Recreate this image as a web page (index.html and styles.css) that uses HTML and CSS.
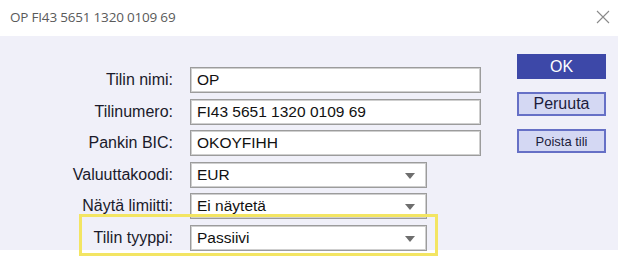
FILE: index.html
```html
<!DOCTYPE html>
<html>
	<head>
		<meta charset="UTF-8" />
		<title>OP FI43 5651 1320 0109 69</title>
		<link rel="stylesheet" href="styles.css">
	</head>
	<body>
		<div class="dialog">
			<header class="titlebar">
				<span class="title">OP FI43 5651 1320 0109 69</span>
				<svg class="close" width="14" height="14" viewBox="0 0 14 14">
					<path d="M1 1 L13 13 M13 1 L1 13" stroke="#8a8a8a" stroke-width="1.1" fill="none" />
				</svg>
			</header>
			<main class="panel">
				<div class="form">
					<label class="label">Tilin nimi:</label>
					<div class="field wide">OP</div>
					<label class="label">Tilinumero:</label>
					<div class="field wide">FI43 5651 1320 0109 69</div>
					<label class="label">Pankin BIC:</label>
					<div class="field wide">OKOYFIHH</div>
					<label class="label">Valuuttakoodi:</label>
					<div class="field select">EUR<span class="arrow"></span></div>
					<label class="label">Näytä limiitti:</label>
					<div class="field select">Ei näytetä<span class="arrow"></span></div>
					<label class="label">Tilin tyyppi:</label>
					<div class="field select">Passiivi<span class="arrow"></span></div>
				</div>
				<div class="buttons">
					<button class="btn primary">OK</button>
					<button class="btn">Peruuta</button>
					<button class="btn small">Poista tili</button>
				</div>
			</main>
			<div class="highlight"></div>
		</div>
	</body>
</html>
```

FILE: styles.css
```css
* {
	margin: 0;
	padding: 0;
	box-sizing: border-box;
}
body {
	background-color: #fff;
	font-family: "Liberation Sans", Arial, sans-serif;
}
.dialog {
	position: relative;
	width: 618px;
	height: 257px;
}
.titlebar {
	height: 36px;
	display: flex;
	align-items: center;
	justify-content: space-between;
	padding-left: 10px;
	padding-right: 8px;
	padding-bottom: 2px;
}
.title {
	font-family: "Open Sans", sans-serif;
	font-size: 13.5px;
	color: #5a5a5a;
	letter-spacing: -0.2px;
}
.panel {
	height: 214px;
	background-color: #f0f0f9;
	display: flex;
	padding-top: 18px;
}
.form {
	margin-top: 13px;
	display: grid;
	grid-template-columns: 174px 291px;
	column-gap: 16px;
	row-gap: 5.5px;
	grid-auto-rows: 26px;
	align-items: center;
}
.label {
	text-align: right;
	font-size: 16px;
	color: #1a1a2a;
	padding-right: 1px;
}
.field {
	height: 26px;
	background-color: #fff;
	border: 1px solid #9c9c9c;
	box-shadow: inset 0 0 0 1px #cfcfcf;
	font-size: 15.5px;
	color: #111;
	padding-left: 6px;
	display: flex;
	align-items: center;
	position: relative;
}
.select {
	width: 237px;
}
.arrow {
	position: absolute;
	right: 11px;
	top: 10px;
	width: 0;
	height: 0;
	border-left: 5px solid transparent;
	border-right: 5px solid transparent;
	border-top: 6px solid #6e6e6e;
}
.buttons {
	margin-left: 36px;
	display: flex;
	flex-direction: column;
	gap: 13px;
}
.btn {
	width: 89px;
	height: 24px;
	font-family: "Liberation Sans", Arial, sans-serif;
	font-size: 16px;
	color: #1c1c3c;
	background-color: #d4d8f3;
	border: 2px solid #6670c6;
}
.btn.primary {
	height: 25px;
	background-color: #3d48a8;
	border-color: #3d48a8;
	color: #fff;
}
.btn.small {
	font-size: 13px;
}
.highlight {
	position: absolute;
	left: 79px;
	top: 214px;
	width: 359px;
	height: 42px;
	border: 3px solid #f3e563;
}
```
